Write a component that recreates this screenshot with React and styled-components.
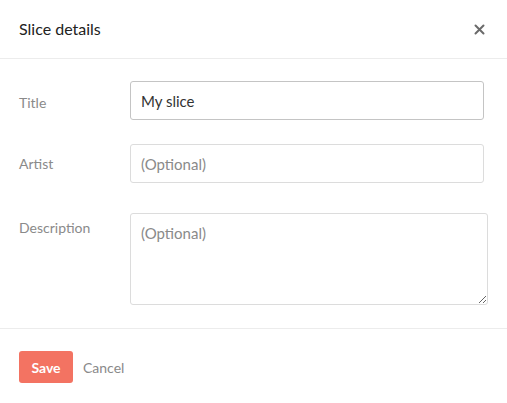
import React from "react";
import styled, { createGlobalStyle } from "styled-components";

const Global = createGlobalStyle`
  html, body { margin: 0; padding: 0; background: #fff; }
  body { font-family: Lato, "Open Sans", sans-serif; color: #333; }
  * { box-sizing: border-box; }
`;

const Dialog = styled.div`
  width: 507px;
  height: 403px;
  background: #fff;
  display: flex;
  flex-direction: column;
`;

const Header = styled.div`
  height: 59px;
  display: flex;
  align-items: center;
  justify-content: space-between;
  padding: 0 19px 0 19px;
  border-bottom: 1px solid #ececec;
`;

const Heading = styled.h2`
  margin: 0;
  font-size: 16px;
  font-weight: 400;
  color: #222;
  padding-bottom: 1px;
`;

const CloseButton = styled.button`
  border: none;
  background: none;
  padding: 0;
  width: 14px;
  height: 14px;
  display: flex;
  align-items: center;
  justify-content: center;
  cursor: pointer;
  margin-right: 2px;
`;

const Body = styled.div`
  padding: 22px 19px 23px 19px;
  display: flex;
  flex-direction: column;
  border-bottom: 1px solid #ececec;
`;

const Row = styled.div`
  display: flex;
  align-items: ${(p) => (p.$top ? "flex-start" : "center")};
  margin-bottom: ${(p) => p.$gap || 0}px;
`;

const Label = styled.label`
  width: 111px;
  flex: none;
  font-size: 14px;
  color: #8a8a8a;
  padding-top: ${(p) => p.$pt || 0}px;
`;

const Input = styled.input`
  width: 354px;
  height: 39px;
  border: 1px solid ${(p) => (p.$active ? "#c4c4c4" : "#dcdcdc")};
  border-radius: 3px;
  padding: 0 10px;
  font-family: inherit;
  font-size: 15px;
  color: #333;
  outline: none;
  &::placeholder { color: #8a8a8a; }
`;

const TextArea = styled.textarea`
  display: block;
  width: 358px;
  height: 92px;
  border: 1px solid #dcdcdc;
  border-radius: 3px;
  padding: 10px 10px;
  font-family: inherit;
  font-size: 15px;
  color: #333;
  outline: none;
  resize: vertical;
  &::placeholder { color: #8a8a8a; }
`;

const Footer = styled.div`
  flex: 1;
  display: flex;
  align-items: flex-start;
  gap: 10px;
  padding: 22px 19px 0 19px;
`;

const SaveButton = styled.button`
  width: 54px;
  height: 32px;
  border: none;
  border-radius: 3px;
  background: #f37362;
  color: #fff;
  font-family: inherit;
  font-size: 14px;
  font-weight: 700;
  cursor: pointer;
`;

const CancelButton = styled.button`
  height: 32px;
  border: none;
  background: none;
  padding: 0;
  color: #8a8a8a;
  font-family: inherit;
  font-size: 14px;
  cursor: pointer;
`;

export default function App() {
  return (
    <>
      <Global />
      <Dialog>
        <Header>
          <Heading>Slice details</Heading>
          <CloseButton aria-label="Close">
            <svg width="11" height="11" viewBox="0 0 11 11">
              <path d="M1.5 1.5L9.5 9.5M9.5 1.5L1.5 9.5" stroke="#6a6a6a" strokeWidth="2" strokeLinecap="round" />
            </svg>
          </CloseButton>
        </Header>
        <Body>
          <Row $gap={24}>
            <Label $pt={3}>Title</Label>
            <Input $active defaultValue="My slice" />
          </Row>
          <Row $gap={30}>
            <Label>Artist</Label>
            <Input placeholder="(Optional)" />
          </Row>
          <Row $top>
            <Label $pt={6}>Description</Label>
            <TextArea placeholder="(Optional)" />
          </Row>
        </Body>
        <Footer>
          <SaveButton>Save</SaveButton>
          <CancelButton>Cancel</CancelButton>
        </Footer>
      </Dialog>
    </>
  );
}
